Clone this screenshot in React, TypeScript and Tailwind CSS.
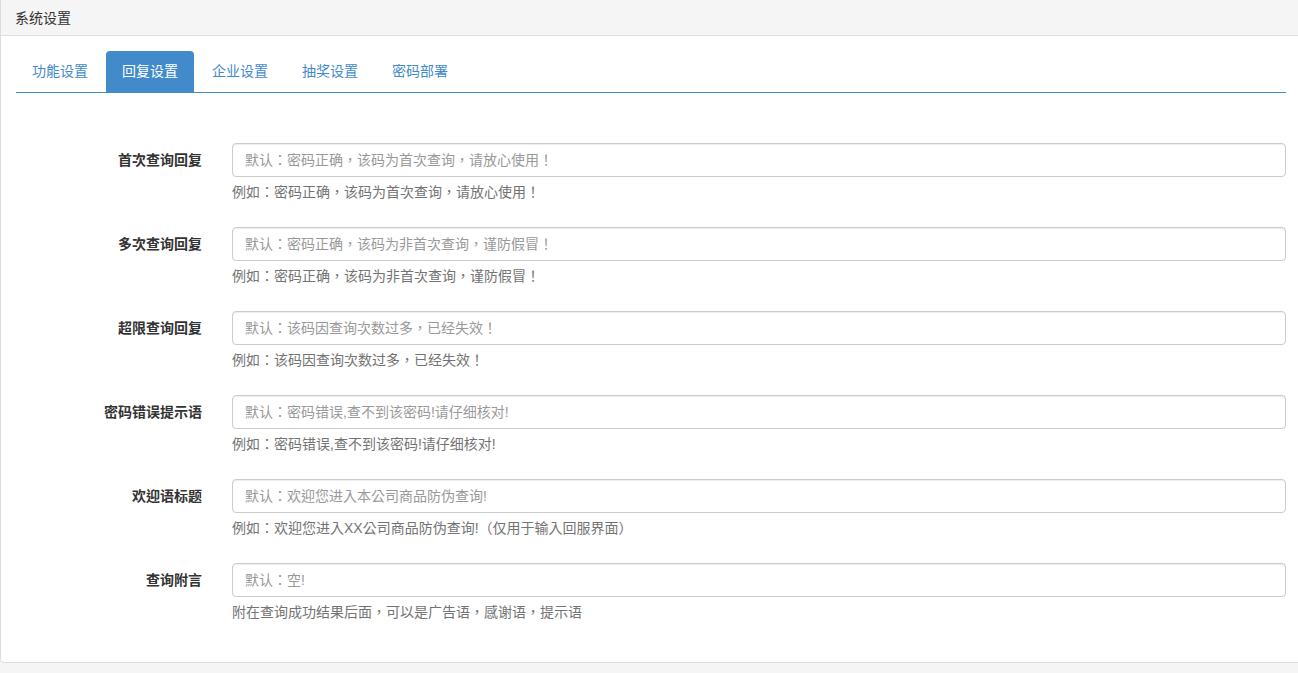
const TABS = ['功能设置', '回复设置', '企业设置', '抽奖设置', '密码部署'];

const FIELDS = [
  { label: '首次查询回复', placeholder: '默认：密码正确，该码为首次查询，请放心使用！', help: '例如：密码正确，该码为首次查询，请放心使用！' },
  { label: '多次查询回复', placeholder: '默认：密码正确，该码为非首次查询，谨防假冒！', help: '例如：密码正确，该码为非首次查询，谨防假冒！' },
  { label: '超限查询回复', placeholder: '默认：该码因查询次数过多，已经失效！', help: '例如：该码因查询次数过多，已经失效！' },
  { label: '密码错误提示语', placeholder: '默认：密码错误,查不到该密码!请仔细核对!', help: '例如：密码错误,查不到该密码!请仔细核对!' },
  { label: '欢迎语标题', placeholder: '默认：欢迎您进入本公司商品防伪查询!', help: '例如：欢迎您进入XX公司商品防伪查询!（仅用于输入回服界面）' },
  { label: '查询附言', placeholder: '默认：空!', help: '附在查询成功结果后面，可以是广告语，感谢语，提示语' },
];

// TC font centers full-width punctuation like the original YaHei rendering
const FONT = '"Liberation Sans", "Noto Sans CJK TC", "Noto Sans CJK SC", sans-serif';

export default function App() {
  return (
    <div
      className="min-h-[673px] overflow-hidden bg-[#f5f5f5] text-[14px] text-[#333]"
      style={{ fontFamily: FONT }}
    >
      <div className="w-[1302px] rounded-b-[4px] border border-t-0 border-[#ddd] bg-white">
        <div className="flex h-[36px] items-center border-b border-[#ddd] bg-[#f5f5f5] px-[14px] leading-5">
          系统设置
        </div>
        <div className="px-[15px] pt-[15px] pb-[15px]">
          <ul className="flex border-b border-[#428bca]">
            {TABS.map((t, i) => (
              <li key={t} className="mr-[2px]">
                <a
                  className={`block h-[41px] rounded-t-[4px] px-4 leading-[41px] ${
                    i === 1 ? 'bg-[#428bca] text-white' : 'text-[#428bca]'
                  }`}
                >
                  {t}
                </a>
              </li>
            ))}
          </ul>

          <div className="pt-[50px]">
            {FIELDS.map((f) => (
              <div key={f.label} className="mb-[25px] flex">
                <label className="h-[34px] w-[186px] shrink-0 text-right font-bold leading-[34px]">
                  {f.label}
                </label>
                <div className="ml-[30px] flex-1">
                  <input
                    type="text"
                    placeholder={f.placeholder}
                    style={{ fontFamily: FONT }}
                    className="block h-[34px] w-full rounded-[4px] border border-[#ccc] px-3 text-[14px] text-[#555] shadow-[inset_0_1px_1px_rgba(0,0,0,0.075)] outline-none placeholder:text-[#999]"
                  />
                  <p className="mt-[5px] leading-5 text-[#737373]">{f.help}</p>
                </div>
              </div>
            ))}
          </div>
        </div>
      </div>
    </div>
  );
}
